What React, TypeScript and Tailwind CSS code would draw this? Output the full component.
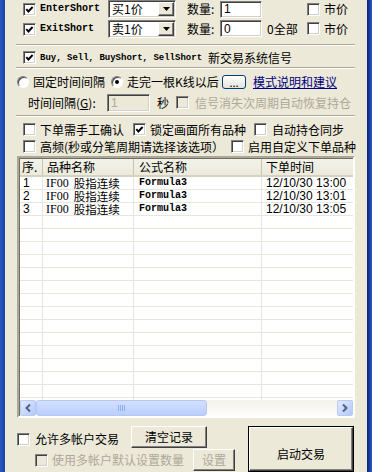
import React from 'react';

const raised =
  'border border-t-white border-l-white border-b-[#404040] border-r-[#404040] shadow-[inset_-1px_-1px_0_#808080]';
const sunken =
  'border border-t-[#808080] border-l-[#808080] border-b-white border-r-white shadow-[inset_1px_1px_0_#404040,inset_-1px_-1px_0_#D4D0C8]';

function Check({ checked = false, disabled = false }: { checked?: boolean; disabled?: boolean }) {
  return (
    <span
      className={`box-border flex h-[13px] w-[13px] shrink-0 items-center justify-center ${sunken} ${
        disabled ? 'bg-[#ECE9D8]' : 'bg-white'
      }`}
    >
      {checked && (
        <svg width="9" height="9" viewBox="0 0 9 9">
          <polyline points="1.3,4.2 3.4,6.5 7.6,2" fill="none" stroke="#000" strokeWidth="1.9" />
        </svg>
      )}
    </span>
  );
}

function Radio({ checked = false }: { checked?: boolean }) {
  return (
    <span className="box-border flex h-[12px] w-[12px] shrink-0 items-center justify-center rounded-full border border-t-[#808080] border-l-[#808080] border-b-white border-r-white bg-white shadow-[inset_1px_1px_0_#404040]">
      {checked && <span className="h-[4px] w-[4px] rounded-full bg-black" />}
    </span>
  );
}

function Select({ value }: { value: string }) {
  return (
    <div className={`box-border flex h-[18px] w-[68px] items-center bg-white ${sunken}`}>
      <span className="flex-1 pl-[3px] text-[12px] leading-[14px]">{value}</span>
      <span className={`mr-[1px] box-border flex h-[14px] w-[16px] items-center justify-center bg-[#ECE9D8] ${raised}`}>
        <svg width="7" height="4" viewBox="0 0 7 4">
          <polygon points="0,0 7,0 3.5,4" fill="#000" />
        </svg>
      </span>
    </div>
  );
}

function Field({ value, disabled = false, w }: { value: string; disabled?: boolean; w: string }) {
  return (
    <div
      className={`box-border flex h-[17px] items-center ${w} ${sunken} ${
        disabled ? 'bg-[#ECE9D8] text-[#ACA899]' : 'bg-white'
      }`}
    >
      <span className="pl-[3px] font-['Liberation_Sans',sans-serif] text-[12px] leading-[14px]">{value}</span>
    </div>
  );
}

function Sep() {
  return <div className="ml-[11px] mr-[12px] h-[2px] border-t border-b border-t-[#ACA899] border-b-white" />;
}

const mono = "font-['Liberation_Mono',monospace]";
const rows = [
  ['1', '12/10/30 13:00'],
  ['2', '12/10/30 13:01'],
  ['3', '12/10/30 13:05'],
];

export default function App() {
  const empty = Array.from({ length: 15 });
  return (
    <div className="flex h-[472px] w-[388px] overflow-hidden bg-white font-['Noto_Sans_CJK_SC',sans-serif] text-[12px] leading-[14px] text-black">
      <div className="w-[5px] shrink-0 bg-gradient-to-r from-[#2a58c0] to-[#1a44a8]" />
      <div className="flex w-[362px] shrink-0 flex-col bg-[#ECE9D8]">
        {/* entry rows */}
        <div className="flex h-[19px] items-center">
          <span className="ml-[18px]"><Check checked /></span>
          <span className={`ml-[4px] w-[68px] ${mono} text-[10px] font-bold`}>EnterShort</span>
          <Select value="买1价" />
          <span className="ml-[11px] w-[33px]">数量:</span>
          <Field value="1" w="w-[42px]" />
          <span className="ml-[45px]"><Check /></span>
          <span className="ml-[4px]">市价</span>
        </div>
        <div className="mt-[1px] flex h-[19px] items-center">
          <span className="ml-[18px] mt-[2px]"><Check checked /></span>
          <span className={`ml-[4px] w-[68px] ${mono} text-[10px] font-bold`}>ExitShort</span>
          <Select value="卖1价" />
          <span className="ml-[11px] w-[33px]">数量:</span>
          <Field value="0" w="w-[42px]" />
          <span className="ml-[5px] w-[40px]">0全部</span>
          <Check />
          <span className="ml-[4px]">市价</span>
        </div>
        <div className="mt-[6px]"><Sep /></div>
        <div className="mt-[5px] flex h-[14px] items-center">
          <span className="ml-[18px]"><Check checked /></span>
          <span className={`ml-[4px] ${mono} text-[9px] font-bold`}>Buy, Sell, BuyShort, SellShort</span>
          <span className="ml-[6px]">新交易系统信号</span>
        </div>
        <div className="mt-[2px]"><Sep /></div>
        {/* mode */}
        <div className="mt-[6px] flex h-[14px] items-center">
          <span className="ml-[12px]"><Radio /></span>
          <span className="ml-[4px] w-[78px]">固定时间间隔</span>
          <Radio checked />
          <span className="ml-[4px] w-[95px]">走完一根K线以后</span>
          <span className="box-border flex h-[14px] w-[24px] items-center justify-center rounded-[3px] border border-[#003C74] bg-gradient-to-b from-white to-[#E3E2DA] text-[11px] leading-[10px]">
            ...
          </span>
          <span className="ml-[7px] text-[#000080] underline">模式说明和建议</span>
        </div>
        <div className="mt-[5px] flex h-[18px] items-center">
          <span className="ml-[23px] w-[79px]">
            时间间隔(<span className="underline">G</span>):
          </span>
          <Field value="1" disabled w="w-[43px] h-[18px]" />
          <span className="ml-[7px] w-[19px]">秒</span>
          <Check disabled />
          <span className="ml-[6px] text-[#ACA899]">信号消失次周期自动恢复持仓</span>
        </div>
        <div className="mt-[3px]"><Sep /></div>
        {/* options */}
        <div className="mt-[6px] flex h-[14px] items-center">
          <span className="ml-[18px]"><Check /></span>
          <span className="ml-[4px] w-[93px]">下单需手工确认</span>
          <Check checked />
          <span className="ml-[4px] w-[104px]">锁定画面所有品种</span>
          <Check />
          <span className="ml-[5px]">自动持仓同步</span>
        </div>
        <div className="mt-[3px] flex h-[14px] items-center">
          <span className="ml-[18px]"><Check /></span>
          <span className="ml-[4px] w-[191px] whitespace-nowrap">高频(秒或分笔周期请选择该选项）</span>
          <Check />
          <span className="ml-[4px] whitespace-nowrap">启用自定义下单品种</span>
        </div>
        {/* list */}
        <div className="ml-[12px] mt-[2px] box-border flex h-[270px] w-[338px] flex-col overflow-hidden border-2 border-t-[#ACA899] border-l-[#ACA899] border-b-white border-r-white">
          <div className="flex flex-1 flex-col overflow-hidden border border-[#716F64] border-r-0 border-b-0 bg-white">
            <div className="flex h-[18px] shrink-0 border-b-2 border-[#D6D2C2] bg-gradient-to-b from-[#F3F2EA] to-[#EBEADB]">
              <div className="w-[23px] shrink-0 border-r border-[#C7C5B2] pl-[2px] leading-[16px]">序.</div>
              <div className="w-[91px] shrink-0 border-r border-[#C7C5B2] pl-[4px] leading-[16px]">品种名称</div>
              <div className="w-[128px] shrink-0 border-r border-[#C7C5B2] pl-[5px] leading-[16px]">公式名称</div>
              <div className="w-[120px] shrink-0 pl-[4px] leading-[16px]">下单时间</div>
            </div>
            <div className="flex-1 overflow-hidden">
              {rows.map(([n, t]) => (
                <div key={n} className="flex h-[13px] items-center border-b border-[#E6E5DE]">
                  <div className="w-[23px] shrink-0 self-stretch border-r border-[#E6E5DE] pl-[3px] font-['Liberation_Sans',sans-serif] text-[12px] leading-[12px]">{n}</div>
                  <div className="flex w-[91px] shrink-0 items-center self-stretch whitespace-nowrap border-r border-[#E6E5DE] pl-[3px] text-[12px] leading-[12px]">
                    <span className="font-['Liberation_Serif',serif]">IF00</span>
                    <span className="ml-[5px] text-[11.5px]">股指连续</span>
                  </div>
                  <div className={`w-[128px] shrink-0 self-stretch border-r border-[#E6E5DE] pl-[5px] ${mono} text-[10px] font-bold leading-[12px]`}>Formula3</div>
                  <div className="w-[120px] shrink-0 whitespace-nowrap pl-[4px] font-['Liberation_Sans',sans-serif] text-[12px] leading-[12px]">{t}</div>
                </div>
              ))}
              {empty.map((_, i) => (
                <div key={i} className="flex h-[13px] border-b border-[#E6E5DE]">
                  <div className="w-[23px] shrink-0 border-r border-[#E6E5DE]" />
                  <div className="w-[91px] shrink-0 border-r border-[#E6E5DE]" />
                  <div className="w-[128px] shrink-0 border-r border-[#E6E5DE]" />
                  <div className="w-[120px] shrink-0" />
                </div>
              ))}
            </div>
            {/* horizontal scrollbar */}
            <div className="flex h-[16px] shrink-0 bg-gradient-to-b from-[#F3F1EC] to-[#FEFEFB]">
              <span className="box-border flex h-[16px] w-[16px] items-center justify-center rounded-[2px] border border-[#B7CBF5] bg-gradient-to-br from-[#E1EAFE] to-[#B4C9F7]">
                <svg width="6" height="8" viewBox="0 0 6 8">
                  <polyline points="5,0.5 1.5,4 5,7.5" fill="none" stroke="#4D6185" strokeWidth="2" />
                </svg>
              </span>
              <span className="box-border flex h-[16px] w-[171px] items-center justify-center rounded-[3px] border border-[#B3C8F5] bg-gradient-to-b from-[#D3E0FD] to-[#B9CEFA]">
                <span className="flex gap-[1px]">
                  {[0, 1, 2, 3].map((k) => (
                    <span key={k} className="h-[6px] w-[1px] bg-[#8CB0F8]" />
                  ))}
                </span>
              </span>
              <span className="flex-1" />
              <span className="box-border flex h-[16px] w-[16px] items-center justify-center rounded-[2px] border border-[#B7CBF5] bg-gradient-to-br from-[#E1EAFE] to-[#B4C9F7]">
                <svg width="6" height="8" viewBox="0 0 6 8">
                  <polyline points="1,0.5 4.5,4 1,7.5" fill="none" stroke="#4D6185" strokeWidth="2" />
                </svg>
              </span>
            </div>
          </div>
        </div>
        {/* bottom */}
        <div className="mt-[8px] flex">
          <div className="flex flex-col">
            <div className="flex h-[22px] items-center">
              <span className="ml-[12px] mt-[4px]"><Check /></span>
              <span className="ml-[5px] mt-[4px] w-[96px] whitespace-nowrap">允许多帐户交易</span>
              <span className={`box-border flex h-[22px] w-[76px] items-center justify-center bg-[#ECE9D8] ${raised}`}>
                清空记录
              </span>
            </div>
            <div className="mt-[1px] flex h-[22px] items-start">
              <span className="ml-[30px] mt-[5px]"><Check disabled /></span>
              <span className="ml-[4px] mt-[4px] w-[141px] whitespace-nowrap text-[#ACA899]">使用多帐户默认设置数量</span>
              <span className={`box-border flex h-[22px] w-[42px] items-center justify-center bg-[#ECE9D8] text-[#ACA899] ${raised}`}>
                设置
              </span>
            </div>
          </div>
          <div className="ml-[13px] box-border h-[46px] w-[106px] border border-black">
            <div className={`box-border flex h-full w-full items-center justify-center bg-[#ECE9D8] pt-[10px] ${raised}`}>
              启动交易
            </div>
          </div>
        </div>
      </div>
      <div className="w-[5px] shrink-0 bg-gradient-to-r from-[#0A1F7A] to-[#2a5cc8]" />
      <div className="flex-1 bg-white" />
    </div>
  );
}
